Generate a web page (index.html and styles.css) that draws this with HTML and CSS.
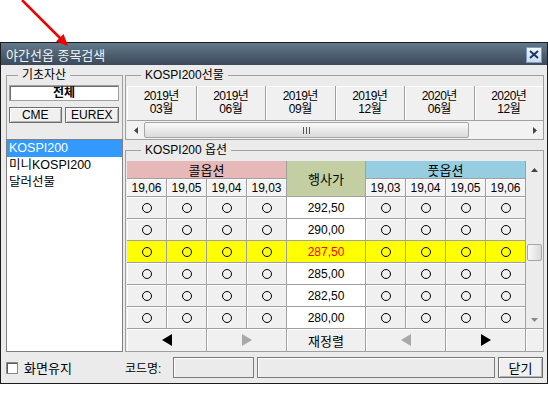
FILE: index.html
```html
<!DOCTYPE html>
<html lang="ko">
<head>
    <meta charset="UTF-8">
    <meta name="viewport" content="width=device-width, initial-scale=1.0">
    <title>야간선옵 종목검색</title>
    <link rel="stylesheet" href="styles.css">
</head>
<body>
<div class="page">
    <svg class="pointer" width="80" height="52" viewBox="0 0 80 52">
        <line x1="22" y1="0" x2="61" y2="39" stroke="#ee0000" stroke-width="2.5"/>
        <polygon points="68,46 56,41.5 63.5,34" fill="#ee0000"/>
    </svg>

    <div class="window">
        <div class="titlebar">
            <span class="title">야간선옵 종목검색</span>
            <span class="close">
                <svg width="10" height="9" viewBox="0 0 10 9"><path d="M1 1 L9 8 M9 1 L1 8" stroke="#14386e" stroke-width="2"/></svg>
            </span>
        </div>

        <div class="client">
            <div class="main">
                <fieldset class="group asset">
                    <legend>기초자산</legend>
                    <div class="field-btn">전체</div>
                    <div class="btn-row">
                        <div class="btn cme">CME</div>
                        <div class="btn eurex">EUREX</div>
                    </div>
                    <div class="listbox">
                        <div class="item selected">KOSPI200</div>
                        <div class="item">미니KOSPI200</div>
                        <div class="item">달러선물</div>
                    </div>
                </fieldset>

                <div class="right">
                    <fieldset class="group futures">
                        <legend>KOSPI200선물</legend>
                        <div class="months">
                            <div class="month">2019년<br>03월</div>
                            <div class="month">2019년<br>06월</div>
                            <div class="month">2019년<br>09월</div>
                            <div class="month">2019년<br>12월</div>
                            <div class="month">2020년<br>06월</div>
                            <div class="month">2020년<br>12월</div>
                        </div>
                        <div class="hscroll">
                            <span class="arrow"><svg width="4" height="7" viewBox="0 0 4 7"><path d="M4 0 L0 3.5 L4 7 Z" fill="#444"/></svg></span>
                            <span class="hthumb">
                                <svg width="8" height="7" viewBox="0 0 8 7"><path d="M0.5 0 V7 M3.5 0 V7 M6.5 0 V7" stroke="#555" stroke-width="1"/></svg>
                            </span>
                            <span class="htrack"></span>
                            <span class="arrow"><svg width="4" height="7" viewBox="0 0 4 7"><path d="M0 0 L4 3.5 L0 7 Z" fill="#444"/></svg></span>
                        </div>
                    </fieldset>

                    <fieldset class="group options">
                        <legend>KOSPI200 옵션</legend>
                        <div class="chain">
                            <div class="hd call">콜옵션</div>
                            <div class="hd strike-hd">행사가</div>
                            <div class="hd put">풋옵션</div>
                            <div class="vscroll">
                                <span class="varrow"><svg width="7" height="4" viewBox="0 0 7 4"><path d="M0 4 L3.5 0 L7 4 Z" fill="#444"/></svg></span>
                                <span class="vtrack"><span class="vthumb"></span></span>
                                <span class="varrow"><svg width="7" height="4" viewBox="0 0 7 4"><path d="M0 0 L3.5 4 L7 0 Z" fill="#888"/></svg></span>
                            </div>

                            <div class="c m">19,06</div><div class="c m">19,05</div><div class="c m">19,04</div><div class="c m">19,03</div>
                            <div class="c m">19,03</div><div class="c m">19,04</div><div class="c m">19,05</div><div class="c m">19,06</div>

                            <div class="c"><i class="dot"></i></div><div class="c"><i class="dot"></i></div><div class="c"><i class="dot"></i></div><div class="c"><i class="dot"></i></div>
                            <div class="c strike">292,50</div>
                            <div class="c"><i class="dot"></i></div><div class="c"><i class="dot"></i></div><div class="c"><i class="dot"></i></div><div class="c"><i class="dot"></i></div>

                            <div class="c"><i class="dot"></i></div><div class="c"><i class="dot"></i></div><div class="c"><i class="dot"></i></div><div class="c"><i class="dot"></i></div>
                            <div class="c strike">290,00</div>
                            <div class="c"><i class="dot"></i></div><div class="c"><i class="dot"></i></div><div class="c"><i class="dot"></i></div><div class="c"><i class="dot"></i></div>

                            <div class="c hl"><i class="dot"></i></div><div class="c hl"><i class="dot"></i></div><div class="c hl"><i class="dot"></i></div><div class="c hl"><i class="dot"></i></div>
                            <div class="c strike hl atm">287,50</div>
                            <div class="c hl"><i class="dot"></i></div><div class="c hl"><i class="dot"></i></div><div class="c hl"><i class="dot"></i></div><div class="c hl"><i class="dot"></i></div>

                            <div class="c"><i class="dot"></i></div><div class="c"><i class="dot"></i></div><div class="c"><i class="dot"></i></div><div class="c"><i class="dot"></i></div>
                            <div class="c strike">285,00</div>
                            <div class="c"><i class="dot"></i></div><div class="c"><i class="dot"></i></div><div class="c"><i class="dot"></i></div><div class="c"><i class="dot"></i></div>

                            <div class="c"><i class="dot"></i></div><div class="c"><i class="dot"></i></div><div class="c"><i class="dot"></i></div><div class="c"><i class="dot"></i></div>
                            <div class="c strike">282,50</div>
                            <div class="c"><i class="dot"></i></div><div class="c"><i class="dot"></i></div><div class="c"><i class="dot"></i></div><div class="c"><i class="dot"></i></div>

                            <div class="c"><i class="dot"></i></div><div class="c"><i class="dot"></i></div><div class="c"><i class="dot"></i></div><div class="c"><i class="dot"></i></div>
                            <div class="c strike">280,00</div>
                            <div class="c"><i class="dot"></i></div><div class="c"><i class="dot"></i></div><div class="c"><i class="dot"></i></div><div class="c"><i class="dot"></i></div>

                            <div class="c nav"><svg width="10" height="12" viewBox="0 0 10 12"><path d="M10 0 L0 6 L10 12 Z" fill="#000"/></svg></div>
                            <div class="c nav"><svg width="10" height="12" viewBox="0 0 10 12"><path d="M0 0 L10 6 L0 12 Z" fill="#a8a8a8"/></svg></div>
                            <div class="c sort">재정렬</div>
                            <div class="c nav"><svg width="10" height="12" viewBox="0 0 10 12"><path d="M10 0 L0 6 L10 12 Z" fill="#a8a8a8"/></svg></div>
                            <div class="c nav"><svg width="10" height="12" viewBox="0 0 10 12"><path d="M0 0 L10 6 L0 12 Z" fill="#000"/></svg></div>
                            <div class="c blank"></div>
                        </div>
                    </fieldset>
                </div>
            </div>

            <div class="statusbar">
                <label class="keep"><span class="checkbox"></span>화면유지</label>
                <span class="code-label">코드명:</span>
                <span class="input code"></span>
                <span class="input name"></span>
                <div class="btn close-btn">닫기</div>
            </div>
        </div>
    </div>
</div>
</body>
</html>
```

FILE: styles.css
```css
* {
    box-sizing: border-box;
}
body {
    margin: 0;
    background: #fff;
    font-family: "Liberation Sans", "Noto Sans CJK KR", sans-serif;
    font-size: 12px;
    color: #000;
}
.page {
    position: relative;
    width: 548px;
    padding-top: 42px;
}
.pointer {
    position: absolute;
    left: 0;
    top: 0;
    z-index: 2;
}
.window {
    width: 548px;
    height: 342px;
    border: 1px solid #1c1c1c;
    background: #ebebeb;
    display: flex;
    flex-direction: column;
}
.titlebar {
    flex: none;
    height: 22px;
    background: linear-gradient(#62798a, #3b4959);
    display: flex;
    align-items: center;
    justify-content: space-between;
    padding: 0 5px 0 5px;
    color: #eef2f6;
}
.title {
    font-size: 13px;
}
.close {
    width: 16px;
    height: 16px;
    margin-top: 1px;
    border: 1px solid #7e9cc0;
    background: linear-gradient(#f2f7fd, #c8daf0);
    display: flex;
    align-items: center;
    justify-content: center;
}
.client {
    flex: 1;
    display: flex;
    flex-direction: column;
    padding: 3px 2px 0 5px;
}
.main {
    display: flex;
    gap: 2px;
}
.group {
    margin: 0;
    min-width: 0;
    border: 1px solid #a0a0a0;
    padding: 0;
}
.group legend {
    padding: 0 4px;
    line-height: 14px;
    font-size: 12px;
}

/* left: underlying asset */
.asset {
    width: 117px;
    padding: 3px 3px 0 2px;
}
.asset legend {
    margin-left: 9px;
}
.field-btn {
    height: 16px;
    background: #fff;
    border: 1px solid #a0a0a0;
    box-shadow: inset 1px 1px 0 #6e6e6e;
    font-weight: bold;
    text-align: center;
    line-height: 14px;
    font-size: 12px;
}
.btn-row {
    display: flex;
    gap: 3px;
    margin-top: 6px;
}
.btn {
    height: 16px;
    background: #f0f0f0;
    border: 1px solid #6e6e6e;
    box-shadow: inset 1px 1px 0 #fff, inset -1px -1px 0 #b4b4b4;
    display: flex;
    align-items: center;
    justify-content: center;
    font-size: 12px;
}
.cme {
    width: 53px;
}
.eurex {
    width: 55px;
}
.listbox {
    height: 213px;
    margin: 16px -4px -1px -3px;
    background: #fff;
    border: 1px solid #7f7f7f;
}
.item {
    height: 17px;
    line-height: 17px;
    padding-left: 2px;
    font-size: 12.5px;
}
.item.selected {
    background: #3399ff;
    color: #fff;
}

/* right: futures + options */
.right {
    width: 419px;
    display: flex;
    flex-direction: column;
}
.futures {
    padding: 4px 0 0 1px;
}
.futures legend,
.options legend {
    margin-left: 14px;
}
.months {
    display: grid;
    grid-template-columns: repeat(6, 1fr);
    gap: 1px;
    height: 35px;
    background: #a0a0a0;
    border-bottom: 1px solid #a0a0a0;
}
.month {
    background: #f0f0f0;
    box-shadow: inset 1px 1px 0 #fff;
    text-align: center;
    font-size: 12px;
    letter-spacing: -0.5px;
    line-height: 13px;
    padding-top: 4px;
}
.hscroll {
    height: 18px;
    display: flex;
    align-items: center;
    background: #f2f2f2;
}
.arrow {
    width: 17px;
    height: 17px;
    display: flex;
    align-items: center;
    justify-content: center;
}
.hthumb {
    width: 325px;
    height: 16px;
    border: 1px solid #a6a6a6;
    border-radius: 2px;
    background: linear-gradient(#fafafa, #dadada);
    display: flex;
    align-items: center;
    justify-content: center;
}
.htrack {
    flex: 1;
}
.options {
    margin-top: 3px;
    padding: 4px 0 0 1px;
}
.chain {
    display: grid;
    grid-template-columns: repeat(4, 39px) 78px repeat(4, 39px) 17px;
    grid-template-rows: 17px 17px repeat(6, 21px) 22px;
    gap: 1px;
    background: #a0a0a0;
}
.c {
    background: #f0f0f0;
    box-shadow: inset 1px 1px 0 #fff;
    display: flex;
    align-items: center;
    justify-content: center;
    font-size: 12px;
}
.hd {
    display: flex;
    align-items: center;
    justify-content: center;
    font-size: 13px;
}
.call {
    grid-column: span 4;
    background: #e6b8b8;
}
.strike-hd {
    grid-row: span 2;
    background: #c3cea3;
}
.put {
    grid-column: span 4;
    background: #96cde0;
}
.m {
    background: #f4f4f4;
}
.strike {
    background: #fff;
    box-shadow: none;
}
.hl {
    background: #ffff00;
    box-shadow: none;
}
.atm {
    color: #ff0000;
}
.dot {
    width: 10px;
    height: 10px;
    border: 1px solid #000;
    border-radius: 50%;
}
.nav {
    grid-column: span 2;
}
.sort {
    font-size: 13px;
}
.vscroll {
    grid-column: 10;
    grid-row: 1 / span 8;
    background: #ececec;
    display: flex;
    flex-direction: column;
}
.varrow {
    height: 17px;
    display: flex;
    align-items: center;
    justify-content: center;
}
.vtrack {
    flex: 1;
    padding-top: 66px;
}
.vthumb {
    display: block;
    height: 17px;
    margin: 0 1px;
    border: 1px solid #a6a6a6;
    border-radius: 2px;
    background: linear-gradient(90deg, #fafafa, #dadada);
}

/* bottom bar */
.statusbar {
    flex: 1;
    display: flex;
    align-items: center;
    font-size: 12px;
}
.keep {
    width: 119px;
    display: flex;
    align-items: center;
    gap: 6px;
    font-size: 13px;
}
.checkbox {
    width: 12px;
    height: 12px;
    background: #fff;
    border: 1px solid #8a8a8a;
    box-shadow: inset 1px 1px 0 #5a5a5a;
}
.code-label {
    width: 48px;
}
.input {
    height: 21px;
    background: #ebebeb;
    border: 1px solid #7a7a7a;
    box-shadow: inset 1px 1px 0 #fff;
}
.code {
    width: 81px;
    margin-right: 3px;
}
.name {
    width: 238px;
    margin-right: 3px;
}
.close-btn {
    width: 45px;
    height: 21px;
    font-size: 13px;
}
```
